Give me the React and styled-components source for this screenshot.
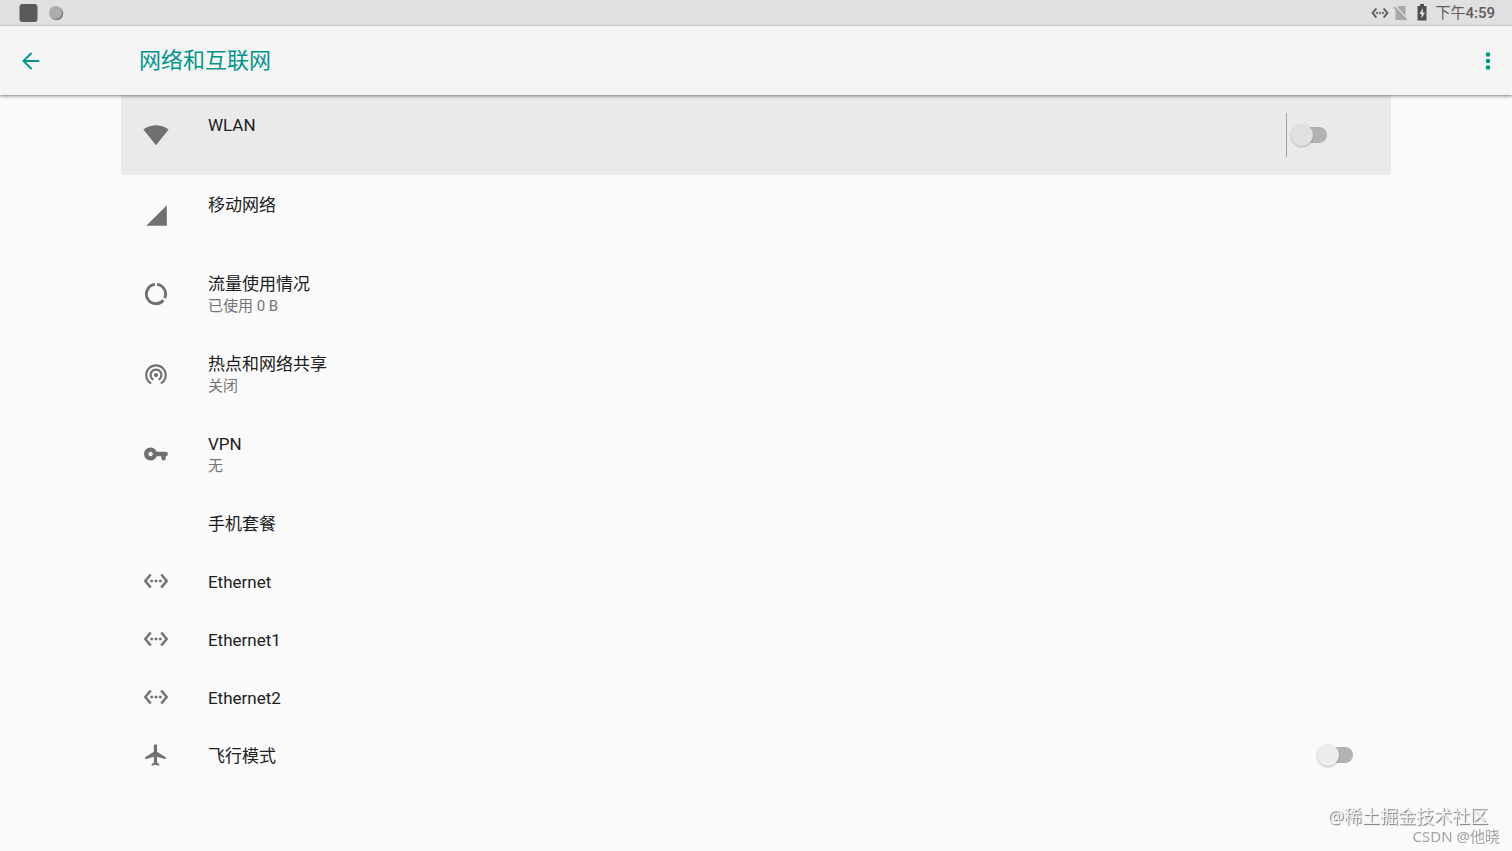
import React from "react";
import styled, { createGlobalStyle } from "styled-components";

const COLORS = {
  accent: "#009688",
  page: "#fafafa",
  bar: "#f5f5f5",
  status: "#e0e0e0",
  pressed: "#eaeaea",
  text: "#202020",
  sub: "#757575",
  icon: "#707070",
};

const GlobalStyle = createGlobalStyle`
  * {
    box-sizing: border-box;
  }
  body {
    margin: 0;
    background: ${COLORS.page};
    font-family: Roboto, "Noto Sans CJK SC", sans-serif;
    color: ${COLORS.text};
  }
  p, h1, ul {
    margin: 0;
    padding: 0;
  }
`;

const StatusBar = styled.div`
  display: flex;
  align-items: center;
  justify-content: space-between;
  height: 26px;
  padding: 0 17px 0 19px;
  background: ${COLORS.status};
`;

const StatusGroup = styled.div`
  display: flex;
  align-items: center;
  gap: ${({ $gap }) => $gap}px;

  p {
    font-size: 15px;
    line-height: 26px;
    color: #5c5c5c;
  }
  .time {
    font-weight: 500;
  }
`;

const Toolbar = styled.header`
  position: relative;
  display: flex;
  align-items: center;
  height: 69px;
  padding: 0 11px 0 17px;
  background: ${COLORS.bar};
  box-shadow: 0 1px 3px rgba(0, 0, 0, 0.5);

  h1 {
    flex: 1;
    margin-left: 95px;
    font-size: 22px;
    font-weight: 400;
    line-height: 32px;
    color: ${COLORS.accent};
  }
`;

const IconButton = styled.button`
  display: flex;
  padding: 0;
  border: 0;
  background: none;
  color: ${COLORS.accent};
`;

const List = styled.ul`
  list-style: none;
  padding: 0 8%;
`;

const Row = styled.li`
  display: flex;
  min-height: ${({ $compact }) => ($compact ? 58 : 79)}px;
  padding-left: 22px;

  &.pressed {
    background: ${COLORS.pressed};
    border-radius: 0 0 2px 2px;
  }
  &.pressed,
  &.two-line {
    min-height: 80px;
  }
`;

const RowIcon = styled.div`
  display: flex;
  align-items: center;
  width: 65px;
  color: ${COLORS.icon};
`;

const RowText = styled.div`
  flex: 1;
  padding-top: 19px;

  .title {
    display: block;
    font-size: 17px;
    line-height: 22px;
  }
  .summary {
    font-size: 15px;
    line-height: 22px;
    color: ${COLORS.sub};
  }
`;

const SwitchArea = styled.div`
  display: flex;
  align-items: center;
  align-self: center;
  height: 44px;
  padding-left: 4px;
  margin-right: ${({ $divided }) => ($divided ? 64 : 38)}px;
  border-left: 1px solid ${({ $divided }) => ($divided ? "#a0a0a0" : "transparent")};
`;

const Switch = styled.input`
  appearance: none;
  display: flex;
  align-items: center;
  width: 36px;
  height: 16px;
  margin: 0;
  background: #b2b2b2;
  border-radius: 8px;

  &::before {
    content: "";
    flex: none;
    width: 22px;
    height: 22px;
    border-radius: 50%;
    background: ${({ $dim }) => ($dim ? "#e0e0e0" : "#ececec")};
    box-shadow: 0 1px 2px rgba(0, 0, 0, 0.25);
  }
  &:checked::before {
    margin-left: 14px;
    background: ${COLORS.accent};
  }
`;

const Watermark = styled.div`
  position: fixed;
  right: 12px;
  bottom: 5px;
  text-align: right;
  font-family: "Noto Sans", "Noto Sans CJK SC", sans-serif;

  .community {
    padding-right: 12px;
    font-size: 18px;
    line-height: 20px;
    color: #f2f2f2;
    text-shadow: 1px 1px 1px #777;
  }
  .author {
    font-size: 15px;
    line-height: 20px;
    color: #a4a4a4;
  }
`;

const PATHS = {
  wifi: "M12.01 21.49 23.64 7c-.45-.34-4.93-4-11.64-4C5.28 3 .81 6.66.36 7l11.63 14.49.01.01.01-.01z",
  signal: "M3 22h19V3z",
  hotspot:
    "M12 11c-1.1 0-2 .9-2 2s.9 2 2 2 2-.9 2-2-.9-2-2-2zm6 2c0-3.31-2.69-6-6-6s-6 2.69-6 6c0 2.22 1.21 4.15 3 5.19l1-1.74c-1.19-.7-2-1.97-2-3.45 0-2.21 1.79-4 4-4s4 1.79 4 4c0 1.48-.81 2.75-2 3.45l1 1.74c1.79-1.04 3-2.97 3-5.19zM12 3C6.48 3 2 7.48 2 13c0 3.7 2.01 6.92 4.99 8.65l1-1.73C5.61 18.53 4 15.96 4 13c0-4.42 3.58-8 8-8s8 3.58 8 8c0 2.96-1.61 5.53-4 6.92l1 1.73c2.99-1.73 5-4.95 5-8.65 0-5.52-4.48-10-10-10z",
  key: "M12.65 10C11.83 7.67 9.61 6 7 6c-3.31 0-6 2.69-6 6s2.69 6 6 6c2.61 0 4.83-1.67 5.65-4H17v2a2 2 0 0 0 4 0v-2a2 2 0 0 0 0-4zM7 14c-1.1 0-2-.9-2-2s.9-2 2-2 2 .9 2 2-.9 2-2 2z",
  ethernet:
    "M7.77 6.76 6.23 5.48.82 12l5.41 6.52 1.54-1.28L3.42 12zM7 13h2v-2H7zm10-2h-2v2h2zm-6 2h2v-2h-2zm6.77-7.52-1.54 1.28L20.58 12l-4.35 5.24 1.54 1.28L23.18 12z",
  airplane:
    "M21 16v-2l-8-5V3.5c0-.83-.67-1.5-1.5-1.5S10 2.67 10 3.5V9l-8 5v2l8-2.5V19l-2 1.5V22l3.5-1 3.5 1v-1.5L13 19v-5.5z",
};

const Icon = ({ name, size = 26 }) => (
  <svg width={size} height={size} viewBox="0 0 24 24" fill="currentColor" aria-hidden="true">
    {name === "data" ? (
      <g fill="none" stroke="currentColor" strokeWidth="2.6">
        <path d="M13 3.2A8.9 8.9 0 0 1 20 15.8" />
        <path d="M18.8 17.8A8.9 8.9 0 1 1 11 3.2" />
      </g>
    ) : (
      <path d={PATHS[name]} stroke={name === "ethernet" ? "currentColor" : "none"} strokeWidth="0.4" />
    )}
  </svg>
);

const rows = [
  { id: "wlan", icon: "wifi", title: "WLAN", toggle: true, pressed: true },
  { id: "mobile", icon: "signal", title: "移动网络" },
  { id: "data", icon: "data", title: "流量使用情况", summary: "已使用 0 B" },
  { id: "hotspot", icon: "hotspot", title: "热点和网络共享", summary: "关闭" },
  { id: "vpn", icon: "key", title: "VPN", summary: "无" },
  { id: "plan", title: "手机套餐", compact: true },
  { id: "eth0", icon: "ethernet", title: "Ethernet", compact: true },
  { id: "eth1", icon: "ethernet", title: "Ethernet1", compact: true },
  { id: "eth2", icon: "ethernet", title: "Ethernet2", compact: true },
  { id: "airplane", icon: "airplane", title: "飞行模式", compact: true, toggle: true },
];

const SettingRow = ({ id, icon, title, summary, compact, toggle, pressed }) => {
  const state = pressed ? "pressed" : summary ? "two-line" : "";

  return (
    <Row $compact={compact} className={state}>
      <RowIcon>{icon && <Icon name={icon} />}</RowIcon>
      <RowText>
        {toggle ? (
          <label className="title" htmlFor={id}>{title}</label>
        ) : (
          <p className="title">{title}</p>
        )}
        {summary && <p className="summary">{summary}</p>}
      </RowText>
      {toggle && (
        <SwitchArea $divided={pressed}>
          <Switch id={id} type="checkbox" role="switch" $dim={pressed} />
        </SwitchArea>
      )}
    </Row>
  );
};

const App = () => {
  return (
    <>
      <GlobalStyle />
      <StatusBar>
        <StatusGroup $gap={10}>
          <svg width="19" height="20" viewBox="0 0 19 20" aria-hidden="true">
            <rect x="0.5" y="1" width="18" height="18" rx="3" fill="#5a5a5a" />
          </svg>
          <svg width="16" height="16" viewBox="0 0 16 16" aria-hidden="true">
            <circle cx="8.5" cy="8.5" r="6.8" fill="#7d7d7d" />
            <circle cx="7.5" cy="7.5" r="6.5" fill="#acacac" />
          </svg>
        </StatusGroup>
        <StatusGroup $gap={4}>
          <svg width="18" height="18" viewBox="0 0 24 24" fill="#5c5c5c" stroke="#5c5c5c" strokeWidth="0.6" aria-hidden="true">
            <path d={PATHS.ethernet} />
          </svg>
          <svg width="16" height="18" viewBox="0 0 16 18" aria-hidden="true">
            <path d="M5.5 2h7v14h-10V5z" fill="#a8a8a8" />
            <path d="M2.2 2 14.5 14.8" stroke="#e0e0e0" strokeWidth="1.5" />
            <path d="M1 3 13.5 16" stroke="#a0a0a0" strokeWidth="1.5" />
          </svg>
          <svg width="18" height="18" viewBox="0 0 18 18" aria-hidden="true">
            <path d="M7 0h4v2h2.5v14.5h-9V2H7z" fill="#505050" />
            <path d="M9.8 4 6.5 10h2v4.5L12 8.5H9.8z" fill="#e0e0e0" />
          </svg>
          <p>下午<span className="time">4:59</span></p>
        </StatusGroup>
      </StatusBar>
      <Toolbar>
        <IconButton type="button" aria-label="返回">
          <svg width="27" height="26" viewBox="0 0 27 26" fill="none" stroke="currentColor" strokeWidth="2" strokeLinecap="round">
            <path d="M21.5 13H6.5M14 5.5 6.5 13l7.5 7.5" />
          </svg>
        </IconButton>
        <h1>网络和互联网</h1>
        <IconButton type="button" aria-label="更多选项">
          <svg width="26" height="26" viewBox="0 0 26 26" fill="currentColor">
            <circle cx="13" cy="6.5" r="2.3" />
            <circle cx="13" cy="13" r="2.3" />
            <circle cx="13" cy="19.5" r="2.3" />
          </svg>
        </IconButton>
      </Toolbar>
      <List>
        {rows.map((row) => (
          <SettingRow key={row.id} {...row} />
        ))}
      </List>
      <Watermark>
        <p className="community">@稀土掘金技术社区</p>
        <p className="author">CSDN @他晓</p>
      </Watermark>
    </>
  );
};

export default App;
